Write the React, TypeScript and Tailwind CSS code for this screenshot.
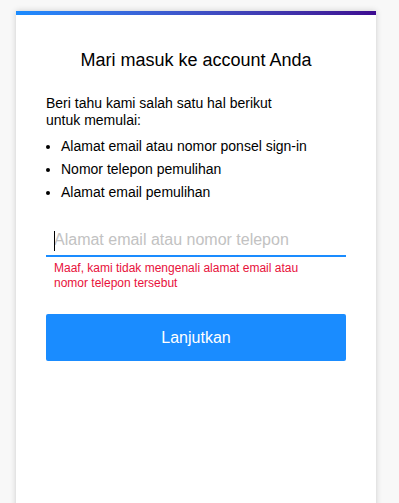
export default function App() {
  return (
    <div
      className="min-h-[503px] h-[503px] overflow-hidden bg-[#f8f8f8] pl-[16px] pt-[11px]"
      style={{ fontFamily: '"Liberation Sans", Arial, sans-serif' }}
    >
      <div className="w-[360px] h-[520px] bg-white shadow-[0_0_6px_rgba(0,0,0,0.18)]">
        <div className="h-[4px] bg-gradient-to-r from-[#1a8cff] to-[#3d0a91]" />
        <div className="px-[30px]">
          <h1 className="mt-[35px] text-center text-[18px] leading-[20px] text-black">
            Mari masuk ke account Anda
          </h1>
          <p className="mt-[25px] text-[14px] leading-[17px] text-black">
            Beri tahu kami salah satu hal berikut
            <br />
            untuk memulai:
          </p>
          <ul className="mt-[6px] text-[14px] leading-[23px] text-black list-disc pl-[15px]">
            <li>Alamat email atau nomor ponsel sign-in</li>
            <li>Nomor telepon pemulihan</li>
            <li>Alamat email pemulihan</li>
          </ul>
          <div className="relative mt-[23px] border-b-2 border-[#1a8cff] pl-[8px] pb-[2px]">
            <input
              className="block w-full text-[16px] leading-[22px] h-[26px] outline-none text-black placeholder:text-[#c2c2c2] caret-transparent"
              placeholder="Alamat email atau nomor telepon"
              style={{ fontFamily: '"Liberation Sans", Arial, sans-serif' }}
            />
            <span className="pointer-events-none absolute left-[8px] top-[4px] h-[20px] w-[1px] bg-black" />
          </div>
          <p className="mt-[4px] pl-[8px] text-[12px] leading-[15px] text-[#e8113b]">
            Maaf, kami tidak mengenali alamat email atau
            <br />
            nomor telepon tersebut
          </p>
          <button
            className="mt-[23px] w-full h-[47px] rounded-[2px] bg-[#1a8cff] text-white text-[16px]"
            style={{ fontFamily: '"Liberation Sans", Arial, sans-serif' }}
          >
            Lanjutkan
          </button>
        </div>
      </div>
    </div>
  );
}
